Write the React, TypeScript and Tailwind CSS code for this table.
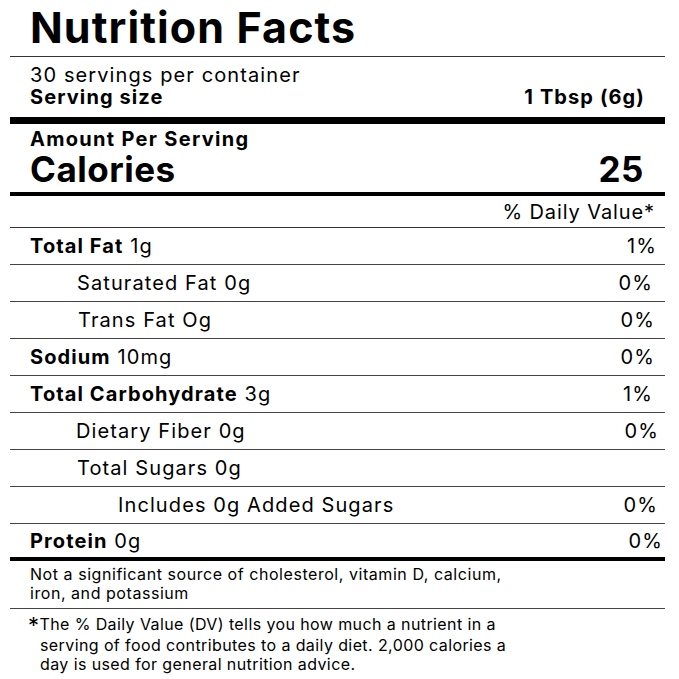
const rows = [
  { label: "Total Fat", amount: "1g", dv: "1%", bold: true, indent: "pl-[20px]", pr: "pr-[8px]" },
  { label: "Saturated Fat 0g", amount: "", dv: "0%", bold: false, indent: "pl-[67px]", pr: "pr-[12px]" },
  { label: "Trans Fat Og", amount: "", dv: "0%", bold: false, indent: "pl-[68px]", pr: "pr-[10px]" },
  { label: "Sodium", amount: "10mg", dv: "0%", bold: true, indent: "pl-[20px]", pr: "pr-[10px]" },
  { label: "Total Carbohydrate", amount: "3g", dv: "1%", bold: true, indent: "pl-[20px]", pr: "pr-[12px]" },
  { label: "Dietary Fiber 0g", amount: "", dv: "0%", bold: false, indent: "pl-[66px]", pr: "pr-[6px]" },
  { label: "Total Sugars 0g", amount: "", dv: "", bold: false, indent: "pl-[67px]", pr: "pr-[6px]" },
  { label: "Includes 0g Added Sugars", amount: "", dv: "0%", bold: false, indent: "pl-[108px]", pr: "pr-[7px]" },
];

export default function App() {
  return (
    <div className="w-[679px] h-[679px] bg-white text-black overflow-hidden font-['Inter','Liberation_Sans',sans-serif]">
      <div className="ml-[10px] w-[655px]">
        {/* title */}
        <div className="h-[57px] border-b border-[#333] pl-[20px] flex items-end pb-[7px]">
          <h1 className="text-[43px] font-bold leading-none tracking-[1.1px]">Nutrition Facts</h1>
        </div>

        {/* servings */}
        <div className="h-[60px] pl-[20px] pr-[20px] pt-[7px] text-[20px] leading-[22px] tracking-[1.1px]">
          <div>30 servings per container</div>
          <div className="flex justify-between font-bold">
            <span>Serving size</span>
            <span>1 Tbsp (6g)</span>
          </div>
        </div>
        <div className="h-[7px] bg-black" />

        {/* calories */}
        <div className="h-[68px] pl-[20px] pr-[21px] pt-[4px]">
          <div className="text-[20px] font-bold leading-[22px] tracking-[1.3px]">Amount Per Serving</div>
          <div className="flex justify-between text-[35px] font-bold leading-[38px] tracking-[0.5px]">
            <span>Calories</span>
            <span>25</span>
          </div>
        </div>
        <div className="h-[4px] bg-black" />

        <div className="h-[32px] border-b border-[#333] flex items-center justify-end pr-[10px] text-[20px] tracking-[0.9px]">
          % Daily Value*
        </div>

        {rows.map((r) => (
          <div
            key={r.label}
            className={`h-[37px] border-b border-[#444] flex items-center justify-between text-[20px] tracking-[1.1px] ${r.indent} ${r.pr}`}
          >
            <span>
              {r.bold ? <b>{r.label}</b> : r.label}
              {r.amount ? " " + r.amount : ""}
            </span>
            <span>{r.dv}</span>
          </div>
        ))}

        <div className="h-[33px] flex items-center justify-between text-[20px] tracking-[1.1px] pl-[20px] pr-[2px]">
          <span>
            <b>Protein</b> 0g
          </span>
          <span>0%</span>
        </div>
        <div className="h-[4px] bg-black" />

        <div className="h-[48px] border-b border-[#444] pl-[20px] pt-[4px] text-[16px] leading-[19px] tracking-[0.55px]">
          Not a significant source of cholesterol, vitamin D, calcium,
          <br />
          iron, and potassium
        </div>

        <div className="pl-[18px] pt-[6px] text-[16px] leading-[19px] tracking-[0.4px]">
          <div className="flex items-start">
            <span className="text-[22px] leading-[22px] -mt-[1px]">*</span>
            <span>The % Daily Value (DV) tells you how much a nutrient in a</span>
          </div>
          <div className="pl-[12px]">serving of food contributes to a daily diet. 2,000 calories a</div>
          <div className="pl-[12px]">day is used for general nutrition advice.</div>
        </div>
      </div>
    </div>
  );
}
